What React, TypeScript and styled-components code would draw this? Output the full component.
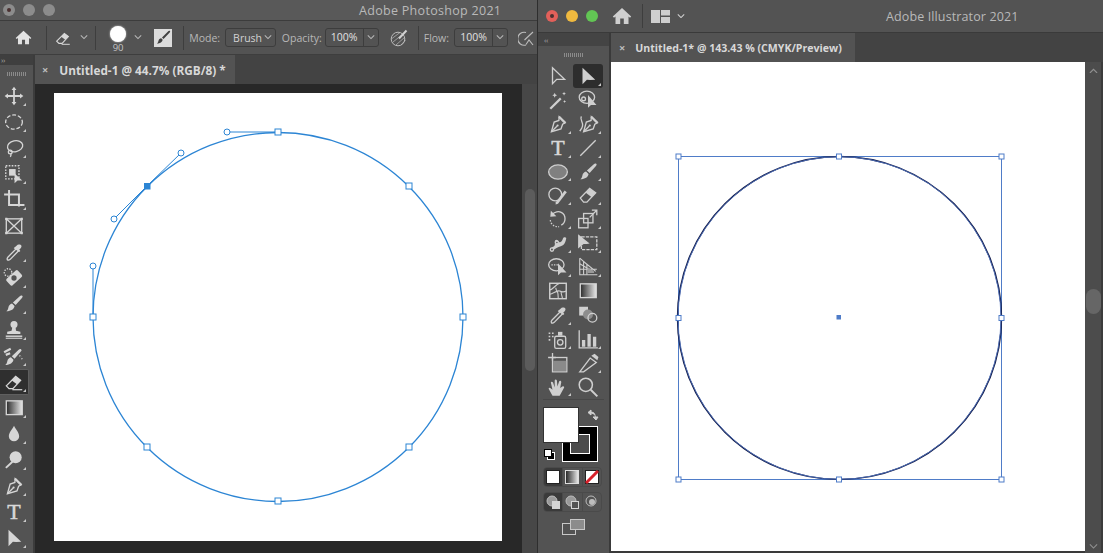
import React from "react";
import styled, { createGlobalStyle } from "styled-components";

const Global = createGlobalStyle`
  html, body { margin: 0; padding: 0; background: #2b2b2b; }
  body { width: 1103px; height: 553px; overflow: hidden; font-family: "Open Sans", "Noto Sans", sans-serif; }
  #root { width: 1103px; height: 553px; }
`;

const Desktop = styled.div`
  display: flex; width: 1103px; height: 553px; gap: 1px; background: #2e2e2e;
`;
const PsWindow = styled.section`
  width: 537px; height: 553px; display: flex; flex-direction: column; background: #535353; overflow: hidden;
`;
const AiWindow = styled.section`
  flex: 1; height: 553px; display: flex; flex-direction: column; background: #535353; overflow: hidden;
`;
const PsTitleBar = styled.header`
  height: 20px; flex: none; display: flex; align-items: center; padding-left: 3px; background: #595959; border-bottom: 1px solid #3c3c3c;
`;
const AiTitleBar = styled.header`
  height: 32px; flex: none; display: flex; align-items: center; padding-left: 8px; background: #535353; border-bottom: 1px solid #3a3a3a;
`;
const Lights = styled.div`
  display: flex; gap: 8px; align-items: center;
`;
const Light = styled.span<{ $c: string; $dot?: boolean }>`
  width: 12px; height: 12px; border-radius: 50%; background: ${p => p.$c}; display: flex; align-items: center; justify-content: center;
  &::after { content: ""; width: 4px; height: 4px; border-radius: 50%; background: ${p => (p.$dot ? "#4a3030" : "transparent")}; }
`;
const WindowTitle = styled.div<{ $left: number; $ls: number }>`
  margin-left: ${p => p.$left}px; color: #b9b9b9; font-size: 12.5px; letter-spacing: ${p => p.$ls}px; white-space: nowrap;
`;
const OptionsBar = styled.div`
  height: 33px; flex: none; display: flex; align-items: center; background: #535353; border-bottom: 1px solid #3e3e3e; color: #b4b4b4;
`;
const Slot = styled.div<{ $w: number; $ml?: number; $c?: string }>`
  width: ${p => p.$w}px; margin-left: ${p => p.$ml ?? 0}px; flex: none; display: flex; align-items: center; justify-content: center; color: ${p => p.$c ?? "inherit"};
`;
const VSep = styled.div<{ $h?: number; $ml?: number }>`
  width: 1px; height: ${p => p.$h ?? 24}px; margin-left: ${p => p.$ml ?? 0}px; background: #3e3e3e; flex: none;
`;
const BrushPreview = styled.div`
  width: 32px; margin: 3px 0 0 7px; display: flex; flex-direction: column; align-items: center; font-size: 9.5px; line-height: 10px; color: #c4c4c4;
`;
const BrushDot = styled.span`
  width: 16px; height: 16px; border-radius: 50%; background: #fff; margin-bottom: 1px; box-shadow: 0 0 2px #ddd;
`;
const Label = styled.span<{ $ml: number }>`
  margin-left: ${p => p.$ml}px; font-size: 10.5px; color: #b8b8b8; white-space: nowrap;
`;
const SelectBox = styled.div`
  margin-left: 5px; width: 53px; height: 19px; box-sizing: border-box; border: 1px solid #3d3d3d; border-radius: 3px; display: flex; align-items: center; justify-content: space-between; padding: 0 3px 0 7px; font-size: 10.5px; color: #d2d2d2;
`;
const NumberBox = styled.div<{ $ml: number }>`
  margin-left: ${p => p.$ml}px; height: 19px; box-sizing: border-box; border: 1px solid #3d3d3d; border-radius: 3px; display: flex; align-items: center; font-size: 10.5px; color: #e0e0e0;
`;
const NumberValue = styled.span`
  width: 37px; text-align: center; border-right: 1px solid #3d3d3d; line-height: 17px;
`;
const NumberCaret = styled.span`
  width: 14px; display: flex; justify-content: center;
`;
const WindowBody = styled.div`
  flex: 1; min-height: 0; display: flex;
`;
const PsToolColumn = styled.aside`
  width: 33px; flex: none; background: #535353; border-right: 2px solid #3c3c3c; display: flex; flex-direction: column;
`;
const AiToolColumn = styled.aside`
  width: 71px; flex: none; background: #535353; border-right: 2px solid #3a3a3a; display: flex; flex-direction: column;
`;
const PanelHead = styled.div<{ $h: number }>`
  height: ${p => p.$h}px; flex: none; background: #3f3f3f; color: #a8a8a8; font-size: 8px; line-height: ${p => p.$h}px; padding-left: 1px; letter-spacing: -0.5px;
`;
const AiPanelHead = styled(PanelHead)`
  padding-left: 6px; background: #444;
`;
const Grip = styled.div<{ $h: number }>`
  height: ${p => p.$h}px; flex: none; display: flex; align-items: center; justify-content: center;
  &::after { content: ""; width: 20px; height: 4px; background: repeating-linear-gradient(90deg, #8b8b8b 0 1px, transparent 1px 2px); }
`;
const PsCell = styled.div<{ $on?: boolean }>`
  position: relative; width: 29px; height: 26px; flex: none; box-sizing: border-box; display: flex; align-items: center; justify-content: center; color: #d6d6d6;
  background: ${p => (p.$on ? "#2f2f2f" : "transparent")};
  border: 1px solid ${p => (p.$on ? "#5f5f5f" : "transparent")};
  border-left: none; border-radius: 0 2px 2px 0;
`;
const Corner = styled.i`
  position: absolute; right: 2px; bottom: 2px; width: 0; height: 0; border-left: 3px solid transparent; border-bottom: 3px solid #c8c8c8;
`;
const AiGrid = styled.div`
  display: grid; grid-template-columns: 30px 30px; grid-auto-rows: 23.9px; margin: 0 0 0 5px;
`;
const AiCell = styled.div<{ $on?: boolean }>`
  position: relative; display: flex; align-items: center; justify-content: center; color: #cfcfcf; border-radius: 3px;
  background: ${p => (p.$on ? "#2d2d2d" : "transparent")};
`;
const TypeGlyph = styled.span<{ $s: number }>`
  font-family: "Liberation Serif", serif; font-size: ${p => p.$s}px; font-weight: 400; line-height: 1; color: #d8d8d8; -webkit-text-stroke: 0.5px #d8d8d8;
`;
const PanelRule = styled.div`
  height: 1px; background: #484848; margin: 1px 5px 7px;
`;
const ColorWell = styled.div`
  margin-left: 5px; line-height: 0;
`;
const ModeRow = styled.div<{ $mt: number }>`
  display: flex; margin: ${p => p.$mt}px 0 0 5px; width: 59px; height: 20px; border-radius: 4px; border: 1px solid #4a4a4a; box-sizing: border-box; overflow: hidden;
`;
const ModeCell = styled.div<{ $on?: boolean }>`
  flex: 1; display: flex; align-items: center; justify-content: center; background: ${p => (p.$on ? "#3a3a3a" : "transparent")}; border-right: 1px solid #4a4a4a;
  &:last-child { border-right: none; }
`;
const ScreenMode = styled.div`
  display: flex; justify-content: center; margin-top: 7px; color: #c8c8c8;
`;
const DocColumn = styled.main`
  flex: 1; min-width: 0; display: flex; flex-direction: column;
`;
const TabStrip = styled.div<{ $h: number }>`
  height: ${p => p.$h}px; flex: none; background: #434343; display: flex;
`;
const DocTab = styled.div<{ $w: number; $pl: number; $s: number }>`
  width: ${p => p.$w}px; box-sizing: border-box; background: #535353; display: flex; align-items: center; padding-left: ${p => p.$pl}px; font-size: ${p => p.$s}px; font-weight: 700; color: #d8d8d8; white-space: nowrap;
`;
const CloseMark = styled.span<{ $mr: number }>`
  color: #bdbdbd; font-size: 11px; font-weight: 700; margin-right: ${p => p.$mr}px; line-height: 1;
`;
const WorkRow = styled.div`
  flex: 1; min-height: 0; display: flex;
`;
const PsCanvas = styled.div`
  width: 487px; flex: none; background: #282828; box-sizing: border-box; padding: 9px 0 0 19px;
`;
const PsArtboard = styled.div`
  width: 448px; height: 448px; background: #fff; line-height: 0;
`;
const PsScroll = styled.div`
  flex: 1; background: #474747; padding: 105px 3px 0 3px; border-right: 2px solid #3d3d3d;
`;
const PsThumb = styled.div`
  width: 10px; height: 182px; border-radius: 5px; background: #5c5c5c;
`;
const AiCanvasWrap = styled.div`
  flex: 1; min-width: 0; display: flex; flex-direction: column; background: #3a3a3a; padding-bottom: 2px;
`;
const AiArtboard = styled.div`
  flex: 1; background: #fff; line-height: 0;
`;
const AiScroll = styled.div`
  width: 16px; flex: none; background: #4c4c4c; border-right: 2px solid #3c3c3c; display: flex; flex-direction: column; align-items: center; padding: 6px 0 4px; color: #8f8f8f;
`;
const AiThumb = styled.div`
  width: 15px; height: 25px; margin-top: 216px; border-radius: 8px; background: #666; flex: none;
`;
const ScrollSpacer = styled.div`
  flex: 1;
`;

const C = "currentColor";
const Ico: React.FC<{ s?: number; children: React.ReactNode }> = ({ s = 22, children }) => (
  <svg width={s} height={s} viewBox="0 0 20 20" fill="none" stroke={C} strokeWidth="1.200">{children}</svg>
);
const Chevron: React.FC<{ up?: boolean; w?: number; c?: string }> = ({ up, w = 8, c = "#b8b8b8" }) => (
  <svg width={w} height={w * 0.6} viewBox="0 0 10 6" fill="none" stroke={c} strokeWidth="1.300">
    <path d={up ? "M1 5.500 5 1.500l4 4" : "M1 .5l4 4 4-4"} />
  </svg>
);
const HomeIcon: React.FC<{ s: number; c: string }> = ({ s, c }) => (
  <svg width={s} height={s} viewBox="0 0 20 20" fill={c}>
    <path d="M10 2 0.8 10.600l1.200 1.200L3.500 10.500V18h4.700v-5.500h3.600V18h4.700v-7.500l1.500 1.300 1.200-1.200z" />
  </svg>
);

const brush = <g fill={C} stroke="none"><path d="M17.500 2.500c.6.5.4 1.200-.3 2L11.500 11 9 8.700l6-5.600c.9-.8 1.800-1.200 2.500-.6z" /><path d="M8.200 9.600l2.300 2.200c-.3 2.600-3 4.600-7.500 4.900 1.400-1 1.600-2.100 1.900-3.500.3-1.700 1.600-3.200 3.300-3.600z" /></g>;
const penNib = <g><path d="M11 3.500 16.500 9l-2.300 1.200-1.500 4.300L4 17l2.500-8.700 4.300-1.500z" fill="none" /><path d="M11.500 2.500l6 6-1.600 1.200-5.600-5.600z" fill={C} stroke="none" /><path d="M4.200 16.800 9 12" /><circle cx="9.600" cy="11.400" r="1" fill={C} stroke="none" /></g>;
const dropper = <g><path d="M12.300 6.800 4.600 14.500c-.8.8-1 1.800-.6 2.500-.1.4 1 .6 1.600.2.500-.3 1-.5 1.400-1l7.400-7.500" /><path d="M11 5.400l1.300-1 1-1 1-.3 1 .1c1 .1 1.600 1 1.500 1.900 0 .6-.3 1-.7 1.400l-1.300 1.300 1 1.200-1.200 1L9.800 6.500l1-1z" fill={C} stroke="none" /></g>;
const eraser = <g><path d="M3 13.500 11.500 5l4.500 3.500L9 16H5.500z" /><path d="M8 8.600 11.700 5l4.600 3.400-3.700 3.600z" fill={C} stroke="none" /><path d="M8.500 17h9" strokeWidth="1.100" /></g>;
const arrowFill = <path d="M5 2.500v15l4-4 3 .1 4.600-.1z" fill={C} stroke="none" />;
const dropBlob = <path d="M10 2.500c1.300 3 4.700 6 4.700 9.500a4.700 4.700 0 1 1-9.400 0c0-3.500 3.400-6.500 4.700-9.500z" fill={C} stroke="none" />;
const gradientRect = (id: string) => (
  <g>
    <defs><linearGradient id={id}><stop offset="0" stopColor="#2a2a2a" /><stop offset="1" stopColor="#e8e8e8" /></linearGradient></defs>
    <rect x="3" y="3.500" width="14.500" height="12.500" fill={`url(#${id})`} stroke="#d6d6d6" />
  </g>
);

type ToolDef = { id: string; icon: React.ReactNode; corner?: boolean; on?: boolean };

const psTools: ToolDef[] = [
  { id: "move", corner: true, icon: <g strokeWidth="1.600"><path d="M10 3v14M3 10h14" /><path d="M10 1.500 7.800 4.500h4.400zM10 18.500l-2.200-3h4.400zM1.500 10l3-2.200v4.400zM18.500 10l-3-2.200v4.400z" fill={C} stroke="none" /></g> },
  { id: "marquee", corner: true, icon: <ellipse cx="10" cy="10" rx="7.600" ry="6.400" strokeDasharray="3.500 1.700" /> },
  { id: "lasso", corner: true, icon: <g><ellipse cx="11" cy="8.400" rx="7" ry="5" transform="rotate(-12 11 8.400)" /><circle cx="6.600" cy="13.600" r="1.700" /><path d="M7 15c.6 1 .3 2-.3 3" /></g> },
  { id: "objectsel", corner: true, icon: <g><rect x="2.500" y="2.500" width="12" height="12" strokeDasharray="1.500 1.200" /><rect x="5.500" y="5.500" width="6" height="6" fill={C} stroke="none" /><path d="M10.500 9.500v9l2.700-2.500h4.300z" fill={C} stroke="none" /></g> },
  { id: "crop", corner: true, icon: <g strokeWidth="1.800"><path d="M1 5h13.500v11" /><path d="M5.500 1v13.500h14" /></g> },
  { id: "frame", icon: <g><rect x="3" y="3.500" width="14" height="13" /><path d="M3 3.500l14 13M17 3.500 3 16.500" /><path d="M2 2.500h2v2H2zM16 2.500h2v2h-2zM2 15.500h2v2H2zM16 15.500h2v2h-2z" fill={C} stroke="none" /></g> },
  { id: "drop", corner: true, icon: dropper },
  { id: "heal", corner: true, icon: <g><rect x="3.200" y="6" width="14" height="8" rx="1.500" transform="rotate(-42 10 10)" fill={C} stroke="none" /><circle cx="10" cy="10" r="2.400" fill="#535353" stroke="none" /><circle cx="4.600" cy="5" r="3.400" strokeDasharray="1.200 1.200" /></g> },
  { id: "brush", corner: true, icon: brush },
  { id: "stamp", corner: true, icon: <g fill={C} stroke="none"><circle cx="10" cy="5" r="3.200" /><path d="M8.600 7h2.800l.4 3.600 4 1v2H3.800v-2l4-1z" /><rect x="2.500" y="15" width="15" height="1.300" /><rect x="2.500" y="17" width="15" height="1" /></g> },
  { id: "history", corner: true, icon: <g><g transform="translate(-1 1.500)">{brush}</g><path d="M1 6.500 7 3.500M2.500 9l4-1.500" strokeWidth="2" /><path d="M15 9.500l1.500 1.500M17 12l.6 1.600" strokeDasharray="1 1" /></g> },
  { id: "eraser", corner: true, on: true, icon: eraser },
  { id: "grad", corner: true, icon: gradientRect("psg") },
  { id: "blur", corner: true, icon: dropBlob },
  { id: "dodge", corner: true, icon: <g fill={C} stroke="none"><circle cx="11.500" cy="7.500" r="5.500" /><path d="M8 11l1.200 1.200-6 5.600-1.200-1.200z" /></g> },
  { id: "pen", corner: true, icon: penNib },
  { id: "type", corner: true, icon: <TypeGlyph $s={22}>T</TypeGlyph> },
  { id: "path", corner: true, icon: arrowFill },
];

const aiTools: ToolDef[] = [
  { id: "direct", icon: <path d="M5 2.500v14.500l3.800-4h7.200z" /> },
  { id: "select", on: true, corner: true, icon: arrowFill },
  { id: "wand", icon: <g><path d="M3 18 12.500 8.500" strokeWidth="2" /><path d="M7 3.500l.7 1.500 1.500.7-1.500.7L7 8l-.7-1.600-1.500-.7 1.500-.7zM15.500 2.500l.5 1.200 1.200.5-1.200.5-.5 1.200-.5-1.200-1.200-.5 1.200-.5zM16 10l.4 1 1 .4-1 .4-.4 1-.4-1-1-.4 1-.4z" fill={C} stroke="none" /></g> },
  { id: "lassoArrow", icon: <g><ellipse cx="9" cy="7.500" rx="7" ry="5.500" /><circle cx="6" cy="9" r="1.700" /><path d="M10 5.500v11.500l2.700-2.500h5z" fill={C} stroke="none" /></g> },
  { id: "aipen", corner: true, icon: penNib },
  { id: "curv", corner: true, icon: <g><g transform="translate(2 0)">{penNib}</g><path d="M4 3c-2 3 2 5 1 9-.4 2-1.500 3-2.500 4.500" /></g> },
  { id: "aitype", corner: true, icon: <TypeGlyph $s={22}>T</TypeGlyph> },
  { id: "line", corner: true, icon: <path d="M3 17 17 3" /> },
  { id: "ellipse", corner: true, icon: <ellipse cx="10" cy="10" rx="8.500" ry="6.400" fill="#808080" stroke="#cfcfcf" /> },
  { id: "aibrush", corner: true, icon: brush },
  { id: "shaper", corner: true, icon: <g><circle cx="7.500" cy="9.500" r="5.800" /><path d="M8 16.500 16 6l2 1.600-8 10.400-2.200.7z" fill={C} stroke="none" /></g> },
  { id: "aieraser", corner: true, icon: <g><path d="M3 12.800 11.500 4l5.500 4-8 8.500H6z" /><path d="M8 8 11.500 4l5.500 4-3.600 4z" fill={C} stroke="none" /></g> },
  { id: "rotate", corner: true, icon: <g><path d="M5 5.500c2-2 5.500-3 8-1.500 4.500 2.500 4.500 9 0 11.500" /><path d="M3.500 2.500 3 8l5.500-.5z" fill={C} stroke="none" /><path d="M3 11c.5 4 4 6.500 8 6" strokeDasharray="1.300 1.300" /></g> },
  { id: "scale", corner: true, icon: <g><rect x="1.500" y="9.500" width="8.500" height="8.500" /><rect x="6" y="5" width="8.500" height="8.500" /><path d="M11.500 8.500 17.500 2.500M13.500 2h4.500v4.500" /></g> },
  { id: "warp", corner: true, icon: <g><path d="M3 16c1-3 3-2 4-4 .7-1.500-.7-3 .5-4.500C9 6 10 8 11 9c1.500 1.200 3-1 3.500-3 .3-1.300 2.500-1.500 3-.5-.5 4-2 6.800-5 7.500-2 .5-3 1-4.500 2-1.500 1-3.300 1.500-5 1z" fill={C} stroke="none" /><circle cx="4.500" cy="16" r="1.500" fill="#535353" /><circle cx="9" cy="9.500" r="1.300" fill="#535353" /></g> },
  { id: "free", corner: true, icon: <g><rect x="4" y="4.500" width="14" height="11.500" strokeDasharray="3 1" /><path d="M1 2v13l5-4 3-.2 2.500-.3z" fill={C} stroke="none" /></g> },
  { id: "shapeb", corner: true, icon: <g><ellipse cx="8.500" cy="8" rx="7" ry="5.500" /><path d="M4 8h6" strokeDasharray="1.300 1" /><path d="M10 6.500v11l2.700-2.500h5z" fill={C} stroke="none" /></g> },
  { id: "persp", corner: true, icon: <g strokeWidth="1"><path d="M2.500 2v15h16" /><path d="M2.500 2 9 7.500v9.500M2.500 7l12 7M2.500 12H18M6 4.500 6 17M9 7.500 17 14" /><path d="M9.500 10l6 4v1.500h-6z" fill="#9a9a9a" stroke="none" /></g> },
  { id: "mesh", icon: <g strokeWidth="1"><rect x="2.500" y="3" width="15" height="14" strokeWidth="1.300" /><path d="M2.500 9c3 0 5-5 9-6M2.500 13c3 0 6-4 9-3 2 1 4 1 6 0M8 7c0 3 2 3 2 6 0 2 .5 3 0 4M13 10c-1 2 1 4 1 7" /></g> },
  { id: "aigrad", icon: gradientRect("aig") },
  { id: "aidrop", corner: true, icon: dropper },
  { id: "blend", icon: <g><rect x="2" y="2.500" width="8" height="8" fill="#d0d0d0" stroke="none" /><circle cx="10" cy="9.500" r="4.500" fill="#8d8d8d" stroke="none" /><circle cx="14" cy="12.500" r="4" stroke="#d0d0d0" /></g> },
  { id: "spray", corner: true, icon: <g><rect x="7" y="7.500" width="10" height="11" rx="1.500" /><circle cx="12" cy="13" r="2.500" /><rect x="10" y="3.500" width="4" height="3.500" fill={C} stroke="none" /><path d="M1.500 4h1.500v1.500H1.500zM4.500 4H6v1.500H4.500zM1.500 7H3v1.500H1.500zM4.500 7H6v1.500H4.500zM1.500 10H3v1.500H1.500z" fill={C} stroke="none" /></g> },
  { id: "graph", corner: true, icon: <g><path d="M2 2v16h17" /><path d="M4.500 11H7.500v6H4.500zM9.500 5.500h3V17h-3zM14.500 8h3v9h-3z" fill={C} stroke="none" /></g> },
  { id: "artb", icon: <g><path d="M5 1v7M1 5h7" /><rect x="5" y="5" width="13" height="13" fill="none" /><rect x="5.500" y="8" width="12" height="9.500" fill="#8a8a8a" stroke="none" /></g> },
  { id: "slice", corner: true, icon: <g><path d="M2.500 18 12 5.500l5.500 4L6 18z" /><path d="M13 3.500l5.500 4 1-3-3.500-3z" fill={C} stroke="none" /></g> },
  { id: "hand", corner: true, icon: <g><path d="M5 18 1.500 11.500c0-1 1-1 1.800-.3L5 12.500 3.500 6c0-1.200 1.500-1 2 0l1.500 4.500V4c0-1 1.500-1.200 2 0l.5 5.500L11 5c.3-1 1.800-.8 2 .5L12 11l2-1.500c1-.7 2 .2 1.500 1.200L11.500 18z" fill={C} stroke="none" /></g> },
  { id: "zoom", icon: <g strokeWidth="1.400"><circle cx="8" cy="8" r="6" /><path d="M12.500 12.500 18.500 18.500" strokeWidth="1.800" /></g> },
];

const Drawing = styled.svg`
  display: block;
`;

const PsDrawing: React.FC = () => {
  const blue = "#2c85d4";
  const anchors: [number, number][] = [[224, 39], [355, 93], [409, 224], [355, 354], [224, 408], [93, 354], [39, 224]];
  const handles: [number, number, number, number][] = [[224, 39, 173, 39], [93, 93, 127, 60], [93, 93, 60, 126], [39, 224, 39, 173]];
  return (
    <Drawing width="448" height="448" viewBox="0 0 448 448">
      <ellipse cx="224" cy="224" rx="185" ry="184.500" fill="none" stroke={blue} strokeWidth="1.300" />
      {handles.map((h, i) => <line key={i} x1={h[0]} y1={h[1]} x2={h[2]} y2={h[3]} stroke={blue} strokeWidth="1" />)}
      {handles.map((h, i) => <circle key={i} cx={h[2]} cy={h[3]} r="3" fill="#fff" stroke={blue} strokeWidth="1" />)}
      {anchors.map((a, i) => <rect key={i} x={a[0] - 3} y={a[1] - 3} width="6" height="6" fill="#fff" stroke={blue} strokeWidth="1" />)}
      <rect x="90" y="90" width="6.500" height="6.500" fill={blue} />
    </Drawing>
  );
};

const AiDrawing: React.FC = () => {
  const blue = "#4f7cc8";
  const cx = 229, cy = 256, r = 161.500;
  const pts: [number, number][] = [[-1, -1], [0, -1], [1, -1], [1, 0], [1, 1], [0, 1], [-1, 1], [-1, 0]];
  return (
    <Drawing width="474" height="489" viewBox="0 0 474 489">
      <rect x={cx - r} y={cy - r} width={r * 2} height={r * 2} fill="none" stroke={blue} strokeWidth="1" />
      <ellipse cx={cx - 0.500} cy={cy} rx={r + 0.500} ry={r} fill="none" stroke="#111a48" strokeWidth="1.500" />
      <ellipse cx={cx - 0.500} cy={cy} rx={r} ry={r - 0.200} fill="none" stroke="#4f72bc" strokeWidth="0.900" />
      {pts.map((p, i) => <rect key={i} x={cx + p[0] * r - 2.500 - (p[0] === 0 ? 1 : 0)} y={cy + p[1] * r - 2.500} width="5" height="5" fill="#fff" stroke={blue} strokeWidth="1" />)}
      <rect x={cx - 3.500} y={cy - 3} width="4.500" height="4.500" fill={blue} />
    </Drawing>
  );
};

const AiSwatches: React.FC = () => (
  <svg width="60" height="56" viewBox="0 0 60 56">
    <rect x="19.500" y="19.500" width="35" height="35" fill="#000" stroke="#fff" />
    <rect x="27.500" y="27.500" width="19" height="19" fill="#4c4c4c" stroke="#fff" />
    <rect x="0.500" y="0.500" width="35" height="35" fill="#fff" stroke="#333" />
    <path d="M46 5.500c3-1 5.500 0 6 2.500M53 12c-.3-2-1-3-1-4M45 5.500l3-2.500v5zM53 13l-3-3h5z" fill="#d0d0d0" stroke="#d0d0d0" strokeWidth="1" />
    <rect x="4.500" y="45.500" width="7" height="7" fill="#000" stroke="#fff" />
    <rect x="1.500" y="42.500" width="7" height="7" fill="#fff" stroke="#000" />
  </svg>
);

const App: React.FC = () => (
  <>
    <Global />
    <Desktop>
      <PsWindow>
        <PsTitleBar>
          <Lights>
            <Light $c="#8c8c8c" $dot />
            <Light $c="#8c8c8c" />
            <Light $c="#8c8c8c" />
          </Lights>
          <WindowTitle $left={304} $ls={0.3}>Adobe Photoshop 2021</WindowTitle>
        </PsTitleBar>
        <OptionsBar>
          <Slot $w={46}><HomeIcon s={17} c="#e2e2e2" /></Slot>
          <VSep />
          <Slot $w={24} $ml={4} $c="#d8d8d8"><Ico s={18}>{eraser}</Ico></Slot>
          <Slot $w={16} $ml={1}><Chevron /></Slot>
          <VSep $ml={3} />
          <BrushPreview><BrushDot />90</BrushPreview>
          <Slot $w={14} $ml={-2}><Chevron /></Slot>
          <Slot $w={20} $ml={8}>
            <svg width="18" height="18" viewBox="0 0 18 18">
              <rect width="18" height="18" fill="#dcdcdc" />
              <path d="M16 2c.6.5-.3 1.500-1 2.200L9.500 10 8 8.500 13.500 3c.9-.9 1.900-1.500 2.500-1zM7.200 9.300l1.500 1.500c-.3 2.200-2.500 3.800-5.700 4 1-1 1.200-1.800 1.500-3 .3-1.300 1.400-2.300 2.700-2.500z" fill="#404040" />
            </svg>
          </Slot>
          <VSep $ml={10} />
          <Label $ml={5}>Mode:</Label>
          <SelectBox>Brush<Chevron /></SelectBox>
          <Label $ml={6}>Opacity:</Label>
          <NumberBox $ml={3}><NumberValue>100%</NumberValue><NumberCaret><Chevron /></NumberCaret></NumberBox>
          <Slot $w={22} $ml={9}>
            <svg width="18" height="18" viewBox="0 0 18 18" fill="none" stroke="#bdbdbd" strokeWidth="1">
              <circle cx="8" cy="10" r="6.800" />
              <path d="M2 9.500 10 3.500M3 13 13 5M6 16 15 8M11 16 15.500 11" strokeWidth=".7" />
              <path d="M9 9.500 16.500 1.500" strokeWidth="2" stroke="#d2d2d2" />
            </svg>
          </Slot>
          <VSep $ml={8} />
          <Label $ml={5}>Flow:</Label>
          <NumberBox $ml={5}><NumberValue>100%</NumberValue><NumberCaret><Chevron /></NumberCaret></NumberBox>
          <Slot $w={20} $ml={9}>
            <svg width="18" height="18" viewBox="0 0 18 18" fill="none" stroke="#bdbdbd" strokeWidth="1.100">
              <path d="M8 3.500A6.500 6.500 0 1 0 8 16" />
              <path d="M6.500 11 15 3M8 15.500 11 11l4 5" />
            </svg>
          </Slot>
        </OptionsBar>
        <WindowBody>
          <PsToolColumn>
            <PanelHead $h={10}>&#8250;&#8250;</PanelHead>
            <Grip $h={18} />
            {psTools.map(t => (
              <PsCell key={t.id} $on={t.on}>
                {t.id === "type" ? t.icon : <Ico>{t.icon}</Ico>}
                {t.corner && <Corner />}
              </PsCell>
            ))}
          </PsToolColumn>
          <DocColumn>
            <TabStrip $h={29}>
              <DocTab $w={200} $pl={7} $s={11.800}>
                <CloseMark $mr={11}>&#215;</CloseMark>Untitled-1 @ 44.7% (RGB/8) *
              </DocTab>
            </TabStrip>
            <WorkRow>
              <PsCanvas>
                <PsArtboard><PsDrawing /></PsArtboard>
              </PsCanvas>
              <PsScroll><PsThumb /></PsScroll>
            </WorkRow>
          </DocColumn>
        </WindowBody>
      </PsWindow>

      <AiWindow>
        <AiTitleBar>
          <Lights>
            <Light $c="#e2605a" $dot />
            <Light $c="#efb93f" />
            <Light $c="#62c554" />
          </Lights>
          <Slot $w={24} $ml={12}><HomeIcon s={20} c="#cfcfcf" /></Slot>
          <VSep $ml={8} />
          <Slot $w={19} $ml={8}>
            <svg width="19" height="13" viewBox="0 0 19 13" fill="#cfcfcf"><rect width="9" height="13" /><rect x="10" width="9" height="5.500" /><rect x="10" y="7" width="9" height="6" /></svg>
          </Slot>
          <Slot $w={10} $ml={6}><Chevron c="#cfcfcf" /></Slot>
          <WindowTitle $left={200} $ls={0.12}>Adobe Illustrator 2021</WindowTitle>
        </AiTitleBar>
        <WindowBody>
          <AiToolColumn>
            <AiPanelHead $h={13}>&#8249;&#8249;</AiPanelHead>
            <Grip $h={18} />
            <AiGrid>
              {aiTools.map(t => (
                <AiCell key={t.id} $on={t.on}>
                  {t.id === "aitype" ? t.icon : <Ico>{t.icon}</Ico>}
                  {t.corner && <Corner />}
                </AiCell>
              ))}
            </AiGrid>
            <PanelRule />
            <ColorWell><AiSwatches /></ColorWell>
            <ModeRow $mt={4}>
              <ModeCell $on><svg width="14" height="14"><rect x=".5" y=".5" width="13" height="13" fill="#fff" stroke="#222" /></svg></ModeCell>
              <ModeCell>
                <svg width="14" height="14"><defs><linearGradient id="mg"><stop offset="0" stopColor="#222" /><stop offset="1" stopColor="#eee" /></linearGradient></defs><rect x=".5" y=".5" width="13" height="13" fill="url(#mg)" stroke="#ddd" /></svg>
              </ModeCell>
              <ModeCell><svg width="14" height="14"><rect x=".5" y=".5" width="13" height="13" fill="#fff" stroke="#222" /><path d="M1 13 13 1" stroke="#d8202a" strokeWidth="3" /></svg></ModeCell>
            </ModeRow>
            <ModeRow $mt={5}>
              {[true, false, false].map((on, i) => (
                <ModeCell key={i} $on={on}>
                  <svg width="14" height="14" viewBox="0 0 14 14">
                    <circle cx="6" cy="6" r="5" fill={i === 2 ? "none" : "#9a9a9a"} stroke="#bdbdbd" />
                    {i === 2 ? <circle cx="7" cy="7" r="3" fill="#bdbdbd" /> : <rect x="6.500" y="6.500" width="7" height="7" fill={i === 0 ? "#d5d5d5" : "#535353"} stroke="#d5d5d5" />}
                  </svg>
                </ModeCell>
              ))}
            </ModeRow>
            <ScreenMode>
              <svg width="23" height="16" viewBox="0 0 23 16" fill="none" stroke={C}>
                <rect x=".5" y="4.500" width="13" height="11" />
                <rect x="8.500" y=".5" width="14" height="10" fill="#8c8c8c" />
              </svg>
            </ScreenMode>
          </AiToolColumn>
          <DocColumn>
            <TabStrip $h={29}>
              <DocTab $w={244} $pl={8} $s={10.600}>
                <CloseMark $mr={10}>&#215;</CloseMark>Untitled-1* @ 143.43 % (CMYK/Preview)
              </DocTab>
            </TabStrip>
            <WorkRow>
              <AiCanvasWrap>
                <AiArtboard><AiDrawing /></AiArtboard>
              </AiCanvasWrap>
              <AiScroll>
                <Chevron up w={9} c="#909090" />
                <AiThumb />
                <ScrollSpacer />
                <Chevron w={9} c="#909090" />
              </AiScroll>
            </WorkRow>
          </DocColumn>
        </WindowBody>
      </AiWindow>
    </Desktop>
  </>
);

export default App;
